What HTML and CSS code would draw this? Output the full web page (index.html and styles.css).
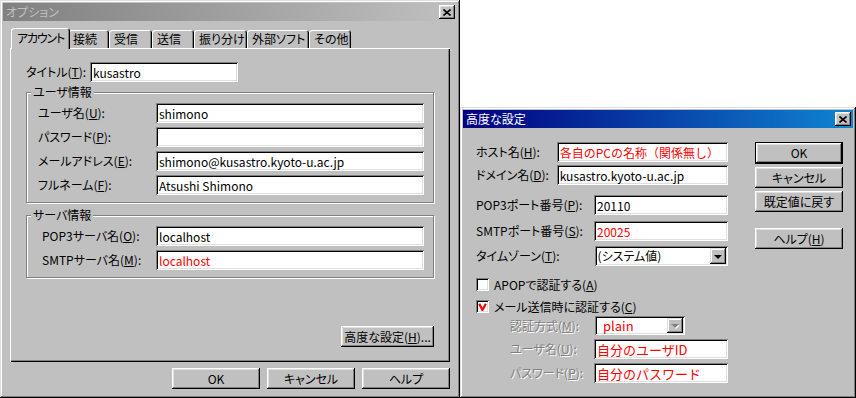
FILE: index.html
```html
<!DOCTYPE html>
<html lang="ja">

<head>
    <meta charset="UTF-8">
    <meta name="viewport" content="width=device-width, initial-scale=1.0">
    <title>オプション</title>
    <link rel="stylesheet" href="styles.css">
</head>

<body>
    <div class="desktop">

        <!-- オプション dialog (inactive) -->
        <div class="window options">
            <div class="titlebar inactive">
                <span class="title">オプション</span>
                <span class="close">
                    <svg width="8" height="7" viewBox="0 0 8 7"><path d="M0.5 0.5L7.5 6.5M7.5 0.5L0.5 6.5" stroke="#000" stroke-width="1.6"/></svg>
                </span>
            </div>
            <div class="options-body">
                <div class="tabs">
                    <div class="tab active">アカウント</div>
                    <div class="tab">接続</div>
                    <div class="tab">受信</div>
                    <div class="tab">送信</div>
                    <div class="tab">振り分け</div>
                    <div class="tab">外部ソフト</div>
                    <div class="tab">その他</div>
                </div>
                <div class="tabpanel">
                    <div class="form-row title-row">
                        <label for="title">タイトル(<u>T</u>):</label>
                        <input class="field title-field" type="text" id="title" value="kusastro">
                    </div>

                    <fieldset class="group user-group">
                        <legend>ユーザ情報</legend>
                        <div class="group-body">
                            <div class="form-row">
                                <label for="user">ユーザ名(<u>U</u>):</label>
                                <input class="field wide" type="text" id="user" value="shimono">
                            </div>
                            <div class="form-row">
                                <label for="pass">パスワード(<u>P</u>):</label>
                                <input class="field wide" type="text" id="pass" value="">
                            </div>
                            <div class="form-row">
                                <label for="mail">メールアドレス(<u>E</u>):</label>
                                <input class="field wide" type="text" id="mail" value="shimono@kusastro.kyoto-u.ac.jp">
                            </div>
                            <div class="form-row">
                                <label for="fullname">フルネーム(<u>F</u>):</label>
                                <input class="field wide" type="text" id="fullname" value="Atsushi Shimono">
                            </div>
                        </div>
                    </fieldset>

                    <fieldset class="group server-group">
                        <legend>サーバ情報</legend>
                        <div class="group-body">
                            <div class="form-row">
                                <label for="pop3">POP3サーバ名(<u>O</u>):</label>
                                <input class="field wide" type="text" id="pop3" value="localhost">
                            </div>
                            <div class="form-row">
                                <label for="smtp">SMTPサーバ名(<u>M</u>):</label>
                                <input class="field wide red" type="text" id="smtp" value="localhost">
                            </div>
                        </div>
                    </fieldset>

                    <div class="panel-actions">
                        <button type="button" class="btn advanced-btn">高度な設定(<u>H</u>)...</button>
                    </div>
                </div>
                <div class="actions">
                    <button type="button" class="btn">OK</button>
                    <button type="button" class="btn">キャンセル</button>
                    <button type="button" class="btn">ヘルプ</button>
                </div>
            </div>
        </div>

        <!-- 高度な設定 dialog (active) -->
        <div class="window advanced">
            <div class="titlebar active">
                <span class="title">高度な設定</span>
                <span class="close">
                    <svg width="8" height="7" viewBox="0 0 8 7"><path d="M0.5 0.5L7.5 6.5M7.5 0.5L0.5 6.5" stroke="#000" stroke-width="1.6"/></svg>
                </span>
            </div>
            <div class="adv-body">
                <div class="adv-form">
                    <div class="adv-row">
                        <label class="lbl-short" for="host">ホスト名(<u>H</u>):</label>
                        <input class="field host-field red" type="text" id="host" value="各自のPCの名称（関係無し）">
                    </div>
                    <div class="adv-row row-domain">
                        <label class="lbl-short" for="domain">ドメイン名(<u>D</u>):</label>
                        <input class="field host-field" type="text" id="domain" value="kusastro.kyoto-u.ac.jp">
                    </div>
                    <div class="adv-row row-pop">
                        <label class="lbl-long" for="popport">POP3ポート番号(<u>P</u>):</label>
                        <input class="field port-field" type="text" id="popport" value="20110">
                    </div>
                    <div class="adv-row row-smtp">
                        <label class="lbl-long" for="smtpport">SMTPポート番号(<u>S</u>):</label>
                        <input class="field port-field red" type="text" id="smtpport" value="20025">
                    </div>
                    <div class="adv-row row-tz">
                        <label class="lbl-long">タイムゾーン(<u>T</u>):</label>
                        <div class="select port-field">
                            <span class="select-text">(システム値)</span>
                            <span class="select-btn"><span class="arrow"></span></span>
                        </div>
                    </div>

                    <div class="check-row check-apop">
                        <span class="checkbox"></span>
                        <span>APOPで認証する(<u>A</u>)</span>
                    </div>
                    <div class="check-row check-auth">
                        <span class="checkbox">
                            <svg width="9" height="9" viewBox="0 0 9 9"><path d="M1.2 1.8L4.5 8L7.8 1.8" stroke="#f00" stroke-width="2.2" fill="none"/></svg>
                        </span>
                        <span>メール送信時に認証する(<u>C</u>)</span>
                    </div>

                    <div class="adv-row sub row-method">
                        <label class="lbl-sub disabled">認証方式(<u>M</u>):</label>
                        <div class="select method-select">
                            <span class="select-text red">plain</span>
                            <span class="select-btn"><span class="arrow off"></span></span>
                        </div>
                    </div>
                    <div class="adv-row sub row-auth">
                        <label class="lbl-sub disabled" for="authuser">ユーザ名(<u>U</u>):</label>
                        <input class="field port-field red big" type="text" id="authuser" value="自分のユーザID">
                    </div>
                    <div class="adv-row sub row-auth">
                        <label class="lbl-sub disabled" for="authpass">パスワード(<u>P</u>):</label>
                        <input class="field port-field red big" type="text" id="authpass" value="自分のパスワード">
                    </div>
                </div>

                <div class="adv-buttons">
                    <button type="button" class="btn default">OK</button>
                    <button type="button" class="btn">キャンセル</button>
                    <button type="button" class="btn">既定値に戻す</button>
                    <button type="button" class="btn help-btn">ヘルプ(<u>H</u>)</button>
                </div>
            </div>
        </div>

    </div>
</body>

</html>
```

FILE: styles.css
```css
* {
    box-sizing: border-box;
}
body {
    margin: 0;
    background: #fff;
    color: #000;
    font-family: "Noto Sans CJK JP", sans-serif;
    font-size: 12px;
    line-height: 14px;
    font-feature-settings: "palt";
}
u {
    text-decoration: underline;
    text-underline-offset: 1px;
}
.desktop {
    position: relative;
    width: 856px;
    height: 398px;
}

/* windows */
.window {
    position: absolute;
    display: flex;
    flex-direction: column;
    padding: 3px;
    background: #c0c0c0;
    box-shadow: inset -1px -1px #000, inset 1px 1px #dfdfdf, inset -2px -2px #808080, inset 2px 2px #fff;
}
.options {
    left: 0;
    top: 0;
    width: 460px;
    height: 398px;
}
.advanced {
    left: 460px;
    top: 107px;
    width: 396px;
    height: 291px;
}
.titlebar {
    height: 18px;
    display: flex;
    align-items: center;
    justify-content: space-between;
    padding: 0 2px 0 3px;
}
.titlebar.inactive {
    background: linear-gradient(90deg, #808080, #c0c0c0);
    color: #c0c0c0;
}
.titlebar.active {
    background: linear-gradient(90deg, #000080, #1084d0);
    color: #fff;
}
.close {
    width: 16px;
    height: 14px;
    display: flex;
    align-items: center;
    justify-content: center;
    background: #c0c0c0;
    box-shadow: inset -1px -1px #000, inset 1px 1px #fff, inset -2px -2px #808080, inset 2px 2px #dfdfdf;
}

/* buttons */
.btn {
    width: 88px;
    height: 21px;
    padding: 0;
    border: none;
    background: #c0c0c0;
    color: #000;
    font-family: inherit;
    font-size: 12px;
    line-height: 14px;
    font-feature-settings: "palt";
    box-shadow: inset -1px -1px #000, inset 1px 1px #fff, inset -2px -2px #808080, inset 2px 2px #dfdfdf;
}
.btn.default {
    height: 22px;
    box-shadow: inset 0 0 0 1px #000, inset -2px -2px #000, inset 2px 2px #fff, inset -3px -3px #808080, inset 3px 3px #dfdfdf;
}

/* inputs */
.field {
    height: 20px;
    margin: 0;
    padding: 0 3px;
    border: none;
    background: #fff;
    color: #000;
    font-family: "Noto Sans CJK JP", sans-serif;
    font-size: 12px;
    font-feature-settings: normal;
    outline: none;
    box-shadow: inset 1px 1px #808080, inset -1px -1px #fff, inset 2px 2px #000, inset -2px -2px #dfdfdf;
}
.red {
    color: #f00;
}
.big {
    font-size: 13px;
}

/* options dialog */
.options-body {
    flex: 1;
    display: flex;
    flex-direction: column;
    padding: 0 7px;
}
.tabs {
    display: flex;
    align-items: flex-end;
    height: 20px;
    margin-top: 7px;
    padding-left: 3px;
}
.tab {
    height: 18px;
    padding: 2px 0 0 5px;
    white-space: nowrap;
    border-radius: 3px 3px 0 0;
    background: #c0c0c0;
    box-shadow: inset 1px 1px #fff, inset -1px 0 #000, inset -2px 0 #808080;
}
.tab:nth-child(1) { width: 55px; letter-spacing: -1.2px; }
.tab:nth-child(2) { width: 41px; }
.tab:nth-child(3) { width: 43px; }
.tab:nth-child(4) { width: 42px; }
.tab:nth-child(5) { width: 53px; }
.tab:nth-child(6) { width: 62px; }
.tab:nth-child(7) { width: 42px; }
.tab.active {
    position: relative;
    z-index: 1;
    width: 59px;
    height: 21px;
    margin: 0 -2px -1px -2px;
    padding: 3px 0 0 6px;
}
.tabpanel {
    height: 314px;
    display: flex;
    flex-direction: column;
    padding: 14px 16px 15px 16px;
    box-shadow: inset 1px 1px #fff, inset -1px -1px #000, inset -2px -2px #808080;
}
.form-row {
    display: flex;
    align-items: center;
    height: 20px;
}
.form-row + .form-row {
    margin-top: 4px;
}
.title-row label {
    width: 64px;
}
.title-field {
    width: 148px;
}
.group {
    margin: 3px 0 0 0;
    padding: 0;
    border: 1px solid #808080;
    box-shadow: inset 1px 1px #fff, 1px 1px #fff;
}
.group legend {
    margin-left: 4px;
    padding: 0 2px;
    background: #c0c0c0;
    line-height: 14px;
}
.group-body {
    padding: 4px 9px 7px 11px;
}
.user-group .form-row label {
    width: 118px;
}
.server-group {
    margin-top: 5px;
}
.server-group .group-body {
    padding-left: 15px;
}
.server-group .form-row label {
    width: 114px;
}
.wide {
    width: 268px;
}
.panel-actions {
    margin-top: auto;
    display: flex;
    justify-content: flex-end;
}
.advanced-btn {
    width: 93px;
}
.actions {
    display: flex;
    justify-content: flex-end;
    gap: 7px;
    margin-top: 6px;
}

/* advanced dialog */
.adv-body {
    display: flex;
    padding: 14px 0 0 13px;
}
.adv-form {
    width: 252px;
}
.adv-row {
    display: flex;
    align-items: center;
    height: 20px;
}
.lbl-short {
    width: 81px;
}
.lbl-long {
    width: 119px;
}
.lbl-sub {
    width: 85px;
}
.adv-row.sub {
    padding-left: 34px;
}
.host-field {
    width: 172px;
}
.port-field {
    width: 134px;
}
.row-domain {
    margin-top: 3px;
}
.row-pop {
    margin-top: 10px;
}
.row-smtp {
    margin-top: 6px;
}
.row-tz {
    margin-top: 5px;
}
.select {
    display: flex;
    height: 20px;
    padding: 2px;
    background: #fff;
    box-shadow: inset 1px 1px #808080, inset -1px -1px #fff, inset 2px 2px #000, inset -2px -2px #dfdfdf;
}
.select-text {
    flex: 1;
    padding-left: 1px;
    line-height: 16px;
}
.select-btn {
    width: 16px;
    height: 16px;
    display: flex;
    align-items: center;
    justify-content: center;
    background: #c0c0c0;
    box-shadow: inset -1px -1px #000, inset 1px 1px #dfdfdf, inset -2px -2px #808080, inset 2px 2px #fff;
}
.arrow {
    width: 0;
    height: 0;
    border-left: 4px solid transparent;
    border-right: 4px solid transparent;
    border-top: 4px solid #000;
    margin-top: 1px;
}
.arrow.off {
    border-top-color: #808080;
    filter: drop-shadow(1px 1px 0 #fff);
}
.method-select {
    width: 90px;
    height: 19px;
}
.method-select .select-text {
    padding-left: 6px;
    font-size: 13px;
    line-height: 15px;
}
.method-select .select-btn {
    height: 15px;
}
.check-row {
    display: flex;
    align-items: center;
    gap: 5px;
    height: 13px;
}
.check-apop {
    margin-top: 12px;
}
.check-auth {
    margin-top: 9px;
}
.checkbox {
    width: 13px;
    height: 13px;
    display: flex;
    align-items: center;
    justify-content: center;
    background: #fff;
    box-shadow: inset 1px 1px #808080, inset -1px -1px #fff, inset 2px 2px #000, inset -2px -2px #dfdfdf;
}
.row-method {
    margin-top: 3px;
    height: 19px;
}
.row-auth {
    margin-top: 4px;
}
.disabled {
    color: #808080;
    text-shadow: 1px 1px 0 #fff;
}
.adv-buttons {
    display: flex;
    flex-direction: column;
    gap: 3px;
    margin-left: 27px;
}
.help-btn {
    margin-top: 13px;
}
```
